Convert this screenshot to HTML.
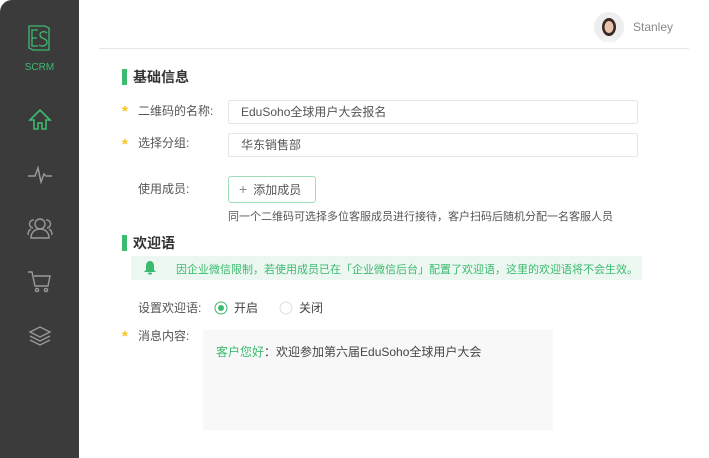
<!DOCTYPE html>
<html><head><meta charset="utf-8"><style>
*{margin:0;padding:0;box-sizing:border-box}
body{width:709px;height:458px;background:#fff;position:relative;overflow:hidden;font-family:"Liberation Sans","Noto Sans CJK SC",sans-serif;color:#555}
.a{position:absolute;white-space:nowrap}
.side{position:absolute;left:0;top:0;width:79px;height:458px;background:#3b3b3b;border-top-left-radius:12px}
.lbl{font-size:12px;color:#555;line-height:14px}
.star{color:#f5c518;font-size:15px;font-weight:bold}
.inp{position:absolute;left:228px;width:410px;height:24px;border:1px solid #e6e6e6;border-radius:2px;font-size:12px;color:#555;padding-left:12px;line-height:22px}
.bar{position:absolute;left:122px;width:5px;height:16px;background:#3cba6f}
.ttl{font-size:14px;color:#333;line-height:16px;font-weight:bold}
</style></head><body>
<div class="side">
<svg class="a" style="left:27px;top:24px" width="26" height="28" viewBox="0 0 26 28" fill="none" stroke="#3cba6f" stroke-width="1.3"><path d="M2 2h16l4 2v22H6l-4-2z"/><path d="M11 6H5v16h6M5 14h5"/><path d="M20 9c-2-2-7-2-7 2s7 3 7 7-5 5-8 3"/></svg>
<div class="a" style="left:0;width:79px;text-align:center;top:62px;font-size:10px;color:#3cba6f">SCRM</div>
<svg class="a" style="left:28px;top:108px" width="24" height="24" viewBox="0 0 24 24" fill="none" stroke="#3cba6f" stroke-width="1.6"><path d="M12 2L2 12h4v9h4v-6h4v6h4v-9h4z"/></svg>
<svg class="a" style="left:27px;top:163px" width="26" height="24" viewBox="0 0 26 24" fill="none" stroke="#9a9a9a" stroke-width="1.5"><path d="M1 13h7l3-8 3 14 3-8 2 2h6"/></svg>
<svg class="a" style="left:27px;top:216px" width="26" height="24" viewBox="0 0 26 24" fill="none" stroke="#9a9a9a" stroke-width="1.4"><circle cx="13" cy="8" r="5"/><path d="M4 22c0-6 4-9 9-9s9 3 9 9z"/><path d="M7 4a4 4 0 0 0-1 8M1 19c0-3 1-5 3-6M19 4a4 4 0 0 1 1 8M25 19c0-3-1-5-3-6"/></svg>
<svg class="a" style="left:27px;top:270px" width="26" height="24" viewBox="0 0 26 24" fill="none" stroke="#9a9a9a" stroke-width="1.4"><path d="M1 2h4l3 14h13l2-10H7"/><circle cx="10" cy="20" r="1.6"/><circle cx="19" cy="20" r="1.6"/></svg>
<svg class="a" style="left:28px;top:325px" width="24" height="22" viewBox="0 0 24 22" fill="none" stroke="#9a9a9a" stroke-width="1.3"><path d="M12 2l10 5-10 5-10-5z"/><path d="M2 11l10 5 10-5M2 15l10 5 10-5"/></svg>
</div>
<svg class="a" style="left:594px;top:12px" width="30" height="30"><circle cx="15" cy="15" r="15" fill="#eee"/><ellipse cx="15" cy="15" rx="7" ry="9" fill="#3a2a22"/><ellipse cx="15" cy="15" rx="4.5" ry="6" fill="#e9c3ad"/><path d="M7 30c2-6 14-6 16 0" fill="#f4f4f4"/></svg>
<div class="a" style="left:633px;top:20px;font-size:12px;color:#888">Stanley</div>
<div class="a" style="left:99px;top:48px;width:590px;height:1px;background:#e6e6e6"></div>

<div class="bar" style="top:69px"></div>
<div class="a ttl" style="left:133px;top:69px">基础信息</div>
<div class="a star" style="left:122px;top:103px">*</div>
<div class="a lbl" style="left:138px;top:104px">二维码的名称:</div>
<div class="inp" style="top:100px">EduSoho全球用户大会报名</div>
<div class="a star" style="left:122px;top:136px">*</div>
<div class="a lbl" style="left:138px;top:136px">选择分组:</div>
<div class="inp" style="top:133px">华东销售部</div>
<div class="a lbl" style="left:138px;top:182px">使用成员:</div>
<div class="a" style="left:228px;top:176px;width:88px;height:27px;border:1px solid #9fdcb8;border-radius:3px;font-size:12px;color:#555;line-height:25px;padding-left:10px"><span style="color:#888;font-size:14px;margin-right:6px">+</span>添加成员</div>
<div class="a" style="left:228px;top:208px;font-size:11px;color:#555">同一个二维码可选择多位客服成员进行接待，客户扫码后随机分配一名客服人员</div>

<div class="bar" style="top:235px"></div>
<div class="a ttl" style="left:133px;top:235px">欢迎语</div>
<div class="a" style="left:131px;top:256px;width:511px;height:24px;background:#edf7f1;border-radius:2px"></div>
<svg class="a" style="left:143px;top:260px" width="14" height="15" viewBox="0 0 14 15"><path d="M7 1c-3 0-4 3-4 5v4l-2 2h12l-2-2V6c0-2-1-5-4-5z" fill="#3cba6f"/><rect x="5" y="12.5" width="4" height="2" rx="1" fill="#3cba6f"/></svg>
<div class="a" style="left:176px;top:261px;font-size:11px;color:#3cba6f">因企业微信限制，若使用成员已在「企业微信后台」配置了欢迎语，这里的欢迎语将不会生效。</div>

<div class="a lbl" style="left:138px;top:301px">设置欢迎语:</div>
<svg class="a" style="left:214px;top:301px" width="14" height="14"><circle cx="7" cy="7" r="6" fill="#fff" stroke="#3cba6f"/><circle cx="7" cy="7" r="3" fill="#3cba6f"/></svg>
<div class="a lbl" style="left:234px;top:301px;color:#444">开启</div>
<svg class="a" style="left:279px;top:301px" width="14" height="14"><circle cx="7" cy="7" r="6" fill="#fff" stroke="#ddd"/></svg>
<div class="a lbl" style="left:299px;top:301px;color:#444">关闭</div>

<div class="a star" style="left:122px;top:328px">*</div>
<div class="a lbl" style="left:138px;top:329px">消息内容:</div>
<div class="a" style="left:203px;top:330px;width:350px;height:100px;background:#f8f8f8"></div>
<div class="a" style="left:216px;top:343px;font-size:12px;color:#444"><span style="color:#3cba6f">客户您好</span>：欢迎参加第六届EduSoho全球用户大会</div>
</body></html>
